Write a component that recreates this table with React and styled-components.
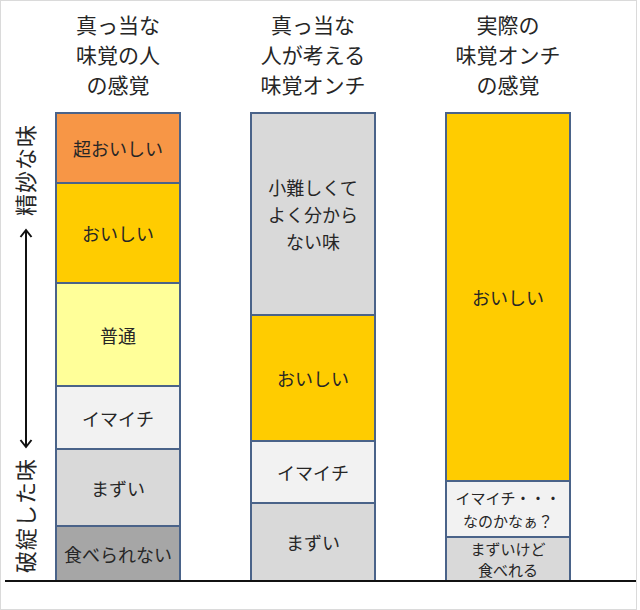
import React from "react";
import styled, { createGlobalStyle } from "styled-components";

const GlobalStyle = createGlobalStyle`
  body {
    margin: 0;
    background: #ffffff;
    font-family: "Noto Sans CJK JP", "Noto Sans", sans-serif;
    color: #262626;
  }
`;

const BORDER = "#4a6389";

const columns = [
  {
    title: ["真っ当な", "味覚の人", "の感覚"],
    parts: [
      { h: 68, bg: "#f79646", text: ["超おいしい"] },
      { h: 100, bg: "#ffcc00", text: ["おいしい"] },
      { h: 103, bg: "#ffff99", text: ["普通"] },
      { h: 63, bg: "#f2f2f2", text: ["イマイチ"] },
      { h: 77, bg: "#d9d9d9", text: ["まずい"] },
      { h: 55, bg: "#a6a6a6", text: ["食べられない"] },
    ],
  },
  {
    title: ["真っ当な", "人が考える", "味覚オンチ"],
    parts: [
      { h: 200, bg: "#d9d9d9", text: ["小難しくて", "よく分から", "ない味"], lh: 27 },
      { h: 126, bg: "#ffcc00", text: ["おいしい"] },
      { h: 62, bg: "#f2f2f2", text: ["イマイチ"] },
      { h: 78, bg: "#d9d9d9", text: ["まずい"] },
    ],
  },
  {
    title: ["実際の", "味覚オンチ", "の感覚"],
    parts: [
      { h: 366, bg: "#ffcc00", text: ["おいしい"] },
      { h: 56, bg: "#f2f2f2", text: ["イマイチ・・・", "なのかなぁ？"], small: true, lh: 23 },
      { h: 44, bg: "#d9d9d9", text: ["まずいけど", "食べれる"], small: true, lh: 21 },
    ],
  },
];

const Frame = styled.div`
  box-sizing: border-box;
  width: 637px;
  height: 610px;
  border: 1px solid #dadada;
  padding-left: 4px;
`;

const Plot = styled.div`
  display: flex;
  height: 579px;
  border-bottom: 2px solid #111111;
`;

const Axis = styled.div`
  width: 50px;
  padding-right: 8px;
  padding-top: 123px;
  box-sizing: border-box;
  display: flex;
  flex-direction: column;
  align-items: center;
`;

const SideLabel = styled.div`
  writing-mode: vertical-rl;
  text-orientation: sideways;
  transform: rotate(180deg);
  margin-right: 5px;
  font-size: 22px;
  line-height: 26px;
  letter-spacing: 1px;
  color: #262626;
  white-space: nowrap;
`;

const ArrowBox = styled.svg`
  display: block;
  margin: 12px 0 9px;
`;

const Columns = styled.div`
  display: flex;
  gap: 69px;
`;

const Column = styled.div`
  width: 126px;
  display: flex;
  flex-direction: column;
`;

const Header = styled.div`
  height: 111px;
  box-sizing: border-box;
  padding-top: 8px;
  text-align: center;
  font-size: 21px;
  line-height: 30px;
  white-space: nowrap;
  margin: 0 -30px;
`;

const Stack = styled.div`
  flex: 1;
  display: flex;
  flex-direction: column;
  border: 2px solid ${BORDER};
  border-bottom: none;
`;

const Segment = styled.div`
  box-sizing: border-box;
  height: ${(p) => p.$h}px;
  background: ${(p) => p.$bg};
  display: flex;
  flex-direction: column;
  align-items: center;
  justify-content: center;
  text-align: center;
  font-size: ${(p) => (p.$small ? 15 : 18)}px;
  line-height: ${(p) => p.$lh || 24}px;
  white-space: nowrap;

  & + & {
    border-top: 2px solid ${BORDER};
  }
`;

const Arrow = () => (
  <ArrowBox width="14" height="221" viewBox="0 0 14 221">
    <line x1="7" y1="2" x2="7" y2="219" stroke="#111" strokeWidth="2" />
    <polyline points="1.5,9 7,2 12.5,9" fill="none" stroke="#111" strokeWidth="2" />
    <polyline points="1.5,212 7,219 12.5,212" fill="none" stroke="#111" strokeWidth="2" />
  </ArrowBox>
);

export default function App() {
  return (
    <>
      <GlobalStyle />
      <Frame>
        <Plot>
          <Axis>
            <SideLabel>精妙な味</SideLabel>
            <Arrow />
            <SideLabel>破綻した味</SideLabel>
          </Axis>
          <Columns>
            {columns.map((col, i) => (
              <Column key={i}>
                <Header>
                  {col.title.map((t) => (
                    <div key={t}>{t}</div>
                  ))}
                </Header>
                <Stack>
                  {col.parts.map((p, j) => (
                    <Segment key={j} $h={p.h} $bg={p.bg} $small={p.small} $lh={p.lh}>
                      {p.text.map((t) => (
                        <div key={t}>{t}</div>
                      ))}
                    </Segment>
                  ))}
                </Stack>
              </Column>
            ))}
          </Columns>
        </Plot>
      </Frame>
    </>
  );
}
